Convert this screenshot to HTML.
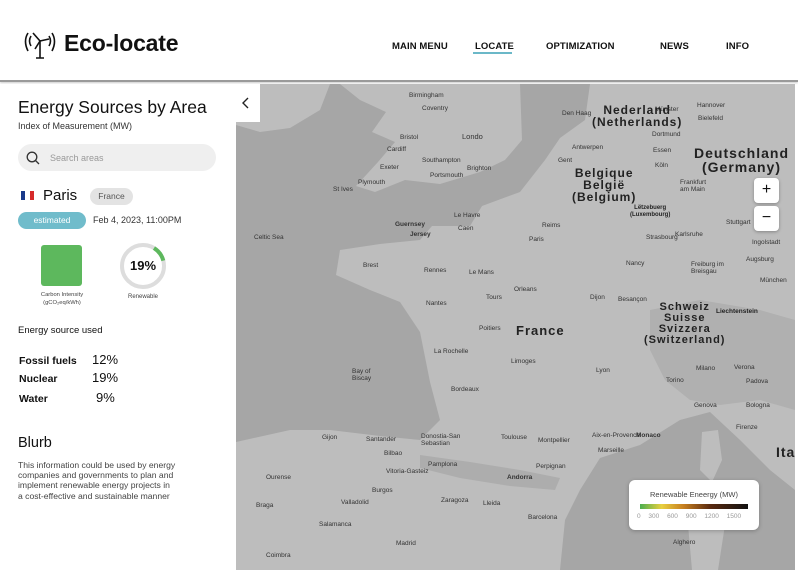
<!DOCTYPE html>
<html><head><meta charset="utf-8"><style>
*{margin:0;padding:0;box-sizing:border-box}
body{width:798px;height:573px;overflow:hidden;background:#fff;font-family:"Liberation Sans",sans-serif;color:#111;position:relative}
.hdr{position:absolute;left:0;top:0;width:798px;height:82px;background:#fff;border-bottom:2px solid #9a9a9a;box-shadow:0 1px 2px rgba(0,0,0,.2)}
.topline{position:absolute;left:0;top:0;width:798px;height:3px;background:#f1f1f1}
.logo{position:absolute;left:64px;top:30px;font-size:23px;font-weight:bold;letter-spacing:-.2px}
.nav{position:absolute;top:41px;font-size:9.5px;font-weight:bold;letter-spacing:.1px}
.side{position:absolute;left:0;top:84px;width:236px;height:489px;background:#fff}
.t{position:absolute;white-space:nowrap}
.map{position:absolute;left:236px;top:84px;width:559px;height:486px;overflow:hidden;background:#bdbdbd}
.ml{position:absolute;font-size:6.5px;color:#333;white-space:nowrap}
.big{position:absolute;font-weight:bold;color:#222;font-size:12px;letter-spacing:1px;text-align:center;line-height:12px}
</style></head><body>
<div class="topline"></div>
<div class="hdr">
<svg style="position:absolute;left:22px;top:29px" width="36" height="32" viewBox="0 0 36 32" fill="none" stroke="#111" stroke-width="1.6">
<path d="M6 4 Q1 12 6 22"/><path d="M30 4 Q35 12 30 22"/>
<path d="M18 12 L18 29 M14 29 L22 29"/>
<path d="M18 12 L11 4 M18 12 L27 10 M18 12 L13 20"/>
<path d="M9 7 Q6 12 9 17"/><path d="M27 7 Q30 12 27 17"/>
</svg>
<div class="logo">Eco-locate</div>
<div class="nav" style="left:392px">MAIN MENU</div>
<div class="nav" style="left:475px">LOCATE</div>
<div style="position:absolute;left:473px;top:52px;width:39px;height:2px;background:#6bb8c8"></div>
<div class="nav" style="left:546px">OPTIMIZATION</div>
<div class="nav" style="left:660px">NEWS</div>
<div class="nav" style="left:726px">INFO</div>
</div>

<div class="side">
<div class="t" style="left:18px;top:13px;font-size:17.5px">Energy Sources by Area</div>
<div class="t" style="left:18px;top:37px;font-size:9px;color:#333">Index of Measurement (MW)</div>
<div style="position:absolute;left:18px;top:60px;width:198px;height:27px;border-radius:14px;background:#efefef"></div>
<svg style="position:absolute;left:26px;top:67px" width="14" height="14" viewBox="0 0 14 14" fill="none" stroke="#333" stroke-width="1.3"><circle cx="6" cy="6" r="4.8"/><path d="M9.5 9.5 L13 13"/></svg>
<div class="t" style="left:50px;top:69px;font-size:9px;color:#999">Search areas</div>
<div style="position:absolute;left:21px;top:107px;width:4px;height:9px;background:#1a3a8a"></div>
<div style="position:absolute;left:26px;top:107px;width:3px;height:9px;background:#fff"></div>
<div style="position:absolute;left:30px;top:107px;width:4px;height:9px;background:#d62a2a"></div>
<div class="t" style="left:43px;top:103px;font-size:15px">Paris</div>
<div style="position:absolute;left:90px;top:104px;width:43px;height:17px;border-radius:9px;background:#e3e3e3;font-size:8.5px;color:#555;text-align:center;line-height:17px">France</div>
<div style="position:absolute;left:18px;top:128px;width:68px;height:17px;border-radius:9px;background:#70bccb;font-size:8.5px;color:#fff;text-align:center;line-height:16px">estimated</div>
<div class="t" style="left:93px;top:131px;font-size:9px;color:#333">Feb 4, 2023, 11:00PM</div>
<div style="position:absolute;left:41px;top:161px;width:41px;height:41px;border-radius:3px;background:#5db85d"></div>
<div class="t" style="left:25px;top:208px;width:74px;text-align:center;font-size:5.8px;color:#444;line-height:7.5px">Carbon Intensity<br>(gCO₂eq/kWh)</div>
<svg style="position:absolute;left:118px;top:157px" width="50" height="50" viewBox="0 0 50 50"><circle cx="25" cy="25" r="21" fill="none" stroke="#ddd" stroke-width="4"/><path d="M36 7.1 A21 21 0 0 1 45.3 19.6" fill="none" stroke="#5db85d" stroke-width="4"/></svg>
<div class="t" style="left:118px;top:174px;width:50px;text-align:center;font-size:13px;font-weight:bold">19%</div>
<div class="t" style="left:118px;top:210px;width:50px;text-align:center;font-size:6px;color:#444">Renewable</div>
<div class="t" style="left:18px;top:241px;font-size:9.5px">Energy source used</div>
<div class="t" style="left:19px;top:271px;font-size:10.5px;font-weight:bold">Fossil fuels</div>
<div class="t" style="left:92px;top:268px;font-size:13px">12%</div>
<div class="t" style="left:19px;top:289px;font-size:10.5px;font-weight:bold">Nuclear</div>
<div class="t" style="left:92px;top:286px;font-size:13px">19%</div>
<div class="t" style="left:19px;top:309px;font-size:10.5px;font-weight:bold">Water</div>
<div class="t" style="left:96px;top:306px;font-size:13px">9%</div>
<div class="t" style="left:18px;top:351px;font-size:14.5px">Blurb</div>
<div class="t" style="left:18px;top:376px;font-size:8.6px;color:#444;line-height:10.2px">This information could be used by energy<br>companies and governments to plan and<br>implement renewable energy projects in<br>a cost-effective and sustainable manner</div>
</div>

<div class="map">
<svg width="559" height="486" viewBox="236 84 559 486" style="position:absolute;left:0;top:0">
<path d="M236 125 L260 132 L290 128 L320 110 L330 84 L340 84 L360 100 L386 112 L372 132 L395 142 L378 162 L356 186 L375 192 L405 180 L440 184 L480 172 L505 160 L522 140 L520 84 L590 84 L585 120 L560 138 L545 160 L520 192 L482 206 L470 226 L432 226 L420 240 L380 244 L340 250 L336 275 L370 290 L400 302 L420 332 L430 382 L440 420 L420 440 L380 436 L330 430 L290 430 L236 442Z" fill="#a6a6a6"/>
<path d="M560 570 L565 520 L580 490 L600 458 L640 445 L680 420 L710 412 L740 440 L770 470 L795 490 L795 570Z" fill="#a6a6a6"/>
<path d="M702 432 L718 430 L722 460 L712 482 L700 470Z" fill="#bdbdbd"/>
<path d="M692 492 L718 490 L725 525 L718 570 L692 570 L688 525Z" fill="#bdbdbd"/>
<path d="M650 310 L700 300 L760 310 L795 320 L795 410 L760 400 L720 405 L690 400 L665 380 L650 350Z" fill="#b0b0b0"/>
<path d="M420 455 L470 462 L520 470 L560 478 L555 490 L510 486 L460 478 L420 468Z" fill="#adadad"/>
</svg>
<div class="ml" style="left:173px;top:8px">Birmingham</div>
<div class="ml" style="left:186px;top:21px">Coventry</div>
<div class="ml" style="left:164px;top:50px">Bristol</div>
<div class="ml" style="left:226px;top:48px;font-size:7.5px">Londo</div>
<div class="ml" style="left:151px;top:62px">Cardiff</div>
<div class="ml" style="left:186px;top:73px">Southampton</div>
<div class="ml" style="left:194px;top:88px">Portsmouth</div>
<div class="ml" style="left:231px;top:81px">Brighton</div>
<div class="ml" style="left:144px;top:80px">Exeter</div>
<div class="ml" style="left:122px;top:95px">Plymouth</div>
<div class="ml" style="left:97px;top:102px">St Ives</div>
<div class="ml" style="left:18px;top:150px">Celtic Sea</div>
<div class="ml" style="left:159px;top:137px;font-weight:bold">Guernsey</div>
<div class="ml" style="left:174px;top:147px;font-weight:bold">Jersey</div>
<div class="ml" style="left:218px;top:128px">Le Havre</div>
<div class="ml" style="left:222px;top:141px">Caen</div>
<div class="ml" style="left:293px;top:152px">Paris</div>
<div class="ml" style="left:306px;top:138px">Reims</div>
<div class="ml" style="left:127px;top:178px">Brest</div>
<div class="ml" style="left:188px;top:183px">Rennes</div>
<div class="ml" style="left:233px;top:185px">Le Mans</div>
<div class="ml" style="left:278px;top:202px">Orleans</div>
<div class="ml" style="left:190px;top:216px">Nantes</div>
<div class="ml" style="left:250px;top:210px">Tours</div>
<div class="ml" style="left:243px;top:241px">Poitiers</div>
<div class="ml" style="left:198px;top:264px">La Rochelle</div>
<div class="ml" style="left:116px;top:284px">Bay of<br>Biscay</div>
<div class="ml" style="left:215px;top:302px">Bordeaux</div>
<div class="ml" style="left:275px;top:274px">Limoges</div>
<div class="ml" style="left:354px;top:210px">Dijon</div>
<div class="ml" style="left:382px;top:212px">Besançon</div>
<div class="ml" style="left:360px;top:283px">Lyon</div>
<div class="ml" style="left:390px;top:176px">Nancy</div>
<div class="ml" style="left:410px;top:150px">Strasbourg</div>
<div class="ml" style="left:265px;top:350px">Toulouse</div>
<div class="ml" style="left:302px;top:353px">Montpellier</div>
<div class="ml" style="left:356px;top:348px">Aix-en-Provence</div>
<div class="ml" style="left:362px;top:363px">Marseille</div>
<div class="ml" style="left:300px;top:379px">Perpignan</div>
<div class="ml" style="left:271px;top:390px;font-weight:bold">Andorra</div>
<div class="ml" style="left:86px;top:350px">Gijon</div>
<div class="ml" style="left:130px;top:352px">Santander</div>
<div class="ml" style="left:185px;top:349px">Donostia-San<br>Sebastian</div>
<div class="ml" style="left:148px;top:366px">Bilbao</div>
<div class="ml" style="left:150px;top:384px">Vitoria-Gasteiz</div>
<div class="ml" style="left:192px;top:377px">Pamplona</div>
<div class="ml" style="left:136px;top:403px">Burgos</div>
<div class="ml" style="left:105px;top:415px">Valladolid</div>
<div class="ml" style="left:205px;top:413px">Zaragoza</div>
<div class="ml" style="left:247px;top:416px">Lleida</div>
<div class="ml" style="left:292px;top:430px">Barcelona</div>
<div class="ml" style="left:83px;top:437px">Salamanca</div>
<div class="ml" style="left:160px;top:456px">Madrid</div>
<div class="ml" style="left:30px;top:390px">Ourense</div>
<div class="ml" style="left:20px;top:418px">Braga</div>
<div class="ml" style="left:30px;top:468px">Coimbra</div>
<div class="ml" style="left:322px;top:73px">Gent</div>
<div class="ml" style="left:336px;top:60px">Antwerpen</div>
<div class="ml" style="left:326px;top:26px">Den Haag</div>
<div class="ml" style="left:419px;top:22px">Münster</div>
<div class="ml" style="left:416px;top:47px">Dortmund</div>
<div class="ml" style="left:417px;top:63px">Essen</div>
<div class="ml" style="left:419px;top:78px">Köln</div>
<div class="ml" style="left:444px;top:95px">Frankfurt<br>am Main</div>
<div class="ml" style="left:461px;top:18px">Hannover</div>
<div class="ml" style="left:462px;top:31px">Bielefeld</div>
<div class="ml" style="left:439px;top:147px">Karlsruhe</div>
<div class="ml" style="left:490px;top:135px">Stuttgart</div>
<div class="ml" style="left:455px;top:177px">Freiburg im<br>Breisgau</div>
<div class="ml" style="left:524px;top:193px">München</div>
<div class="ml" style="left:516px;top:155px">Ingolstadt</div>
<div class="ml" style="left:510px;top:172px">Augsburg</div>
<div class="ml" style="left:430px;top:293px">Torino</div>
<div class="ml" style="left:460px;top:281px">Milano</div>
<div class="ml" style="left:498px;top:280px">Verona</div>
<div class="ml" style="left:510px;top:294px">Padova</div>
<div class="ml" style="left:458px;top:318px">Genova</div>
<div class="ml" style="left:510px;top:318px">Bologna</div>
<div class="ml" style="left:400px;top:348px;font-weight:bold">Monaco</div>
<div class="ml" style="left:500px;top:340px">Firenze</div>
<div class="ml" style="left:456px;top:397px">Bastia</div>
<div class="ml" style="left:472px;top:438px">Sassari</div>
<div class="ml" style="left:437px;top:455px">Alghero</div>
<div class="big" style="left:356px;top:20px">Nederland<br>(Netherlands)</div>
<div class="big" style="left:336px;top:83px">Belgique<br>België<br>(Belgium)</div>
<div class="big" style="left:394px;top:121px;font-size:6px;letter-spacing:0;line-height:7px">Lëtzebuerg<br>(Luxembourg)</div>
<div class="big" style="left:458px;top:62px;font-size:14px;line-height:14px">Deutschland<br>(Germany)</div>
<div class="big" style="left:280px;top:241px;font-size:13px">France</div>
<div class="big" style="left:408px;top:218px;line-height:11px;font-size:11px;color:#222">Schweiz<br>Suisse<br>Svizzera<br>(Switzerland)</div>
<div class="big" style="left:480px;top:222px;font-size:6.5px;letter-spacing:0;color:#222">Liechtenstein</div>
<div class="big" style="left:540px;top:362px;font-size:14px">Ita</div>
<div style="position:absolute;left:518px;top:94px;width:25px;height:25px;background:#fff;border-radius:4px;box-shadow:0 1px 3px rgba(0,0,0,.3);text-align:center;line-height:24px;font-size:16px">+</div>
<div style="position:absolute;left:518px;top:122px;width:25px;height:25px;background:#fff;border-radius:4px;box-shadow:0 1px 3px rgba(0,0,0,.3);text-align:center;line-height:23px;font-size:16px">−</div>
<div style="position:absolute;left:393px;top:396px;width:130px;height:50px;background:#fff;border-radius:6px;box-shadow:0 1px 4px rgba(0,0,0,.25)">
<div class="t" style="left:0;width:130px;text-align:center;top:10px;font-size:7.5px;color:#444">Renewable Eneergy (MW)</div>
<div style="position:absolute;left:11px;top:24px;width:108px;height:5px;background:linear-gradient(90deg,#4caf50,#e8d040 20%,#c88020 40%,#5a2a10 65%,#111)"></div>
<div class="t" style="left:8px;top:33px;font-size:6.5px;color:#999;word-spacing:6px">0 300 600 900 1200 1500</div>
</div>
</div>
<div style="position:absolute;left:236px;top:84px;width:24px;height:38px;background:#fff"></div>
<svg style="position:absolute;left:241px;top:97px" width="10" height="12" viewBox="0 0 10 12" fill="none" stroke="#222" stroke-width="1.4"><path d="M7 1 L2 6 L7 11"/></svg>
</body></html>
